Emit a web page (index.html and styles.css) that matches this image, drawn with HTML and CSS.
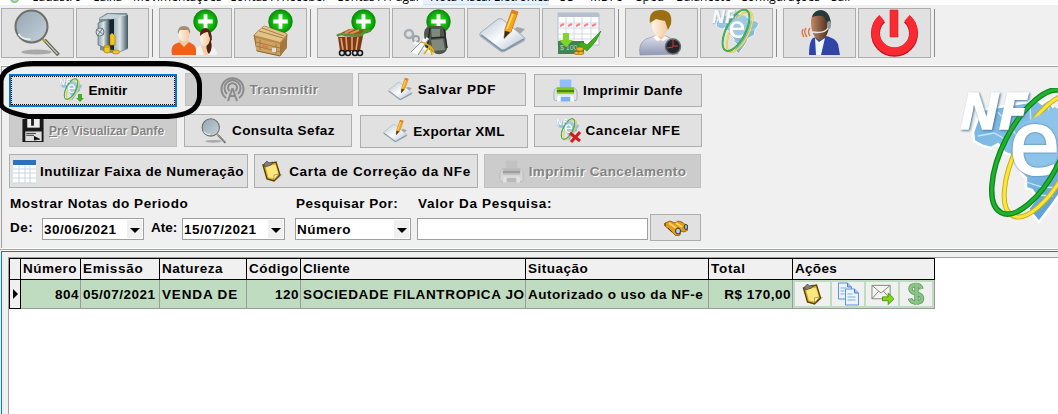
FILE: index.html
```
<!DOCTYPE html>
<html lang="pt-BR">
<head>
<meta charset="utf-8">
<title>Nota Fiscal Eletrônica</title>
<link rel="stylesheet" href="styles.css">
</head>
<body>
<svg class="defs" width="0" height="0">
  <defs>
    <linearGradient id="metal" x2="1"><stop stop-color="#8fa3ac"/><stop offset=".5" stop-color="#dce6ea"/><stop offset="1" stop-color="#40565f"/></linearGradient>
    <radialGradient id="green"><stop stop-color="#3ee02c"/><stop offset=".7" stop-color="#0fb40c"/><stop offset="1" stop-color="#078a08"/></radialGradient>
    <linearGradient id="glass" x2="1" y2="1"><stop stop-color="#94a5b3"/><stop offset="1" stop-color="#c6d2da"/></linearGradient>
    <linearGradient id="paper" x2="1" y2="1"><stop stop-color="#b9c3ce"/><stop offset=".5" stop-color="#fafcff"/><stop offset="1" stop-color="#aab8c6"/></linearGradient>
    <linearGradient id="map" x2=".7" y2="1"><stop stop-color="#6fb0dd"/><stop offset=".5" stop-color="#8cc3ea"/><stop offset="1" stop-color="#4f97cf"/></linearGradient>
    <linearGradient id="skin" x2="1"><stop stop-color="#fff3e4"/><stop offset="1" stop-color="#f3c9a0"/></linearGradient>
    <linearGradient id="brown" x2="1"><stop stop-color="#c08a66"/><stop offset="1" stop-color="#4a2a18"/></linearGradient>
    <linearGradient id="shirt" y2="1" x2="0"><stop stop-color="#dcdfec"/><stop offset="1" stop-color="#9298b4"/></linearGradient>
  </defs>
  <symbol id="plus" viewBox="0 0 26 26">
    <circle cx="13" cy="13" r="12.300" fill="url(#green)" stroke="#0a8a0a" stroke-width=".8"/>
    <path d="M13 5.500v15M5.500 13h15" stroke="#fff" stroke-width="4"/>
  </symbol>
  <symbol id="lens" viewBox="0 0 48 48">
    <ellipse cx="23" cy="43" rx="15" ry="2.600" fill="#a9a9a9"/>
    <path d="M31 31l14 15" stroke="#66665c" stroke-width="3.600"/>
    <path d="M30 30l14 15" stroke="#c9c9b4" stroke-width="1.200"/>
    <path d="M29 30l3 3" stroke="#b9a23b" stroke-width="2.400"/>
    <circle cx="18" cy="17.500" r="16" fill="url(#glass)" stroke="#6e7168" stroke-width="2"/>
    <path d="M5 25c3 4 7 6 12 5" stroke="#e4edf2" stroke-width="2" fill="none"/>
  </symbol>
  <symbol id="nfe" viewBox="0 0 144 140">
    <path d="M68 14l8-3 6 5 7-5 6 12 12 3 8 6 18 4 7 7-3 9-8 10-2 16-12 6-8 5-3 11-12 17-13 17-11-13 9-12-5-7-6-2 0-10-5-5-5-16-11-4-7-9-7 4-8-2-9-5-1-9 8-22z" fill="url(#map)" stroke="#fff" stroke-width="2.500"/>
    <path d="M18 48l16-3 13 7M38 24l12 14 8 12M70 15l1 22 19 6 8 18 17 5 17-8M90 15l-5 22 17-13M100 25l-5 22 18-18M66 94l16 5 22 1M77 107l16 1M62 79l20-3" fill="none" stroke="#c8e5f7" stroke-width="1.300"/>
    <g fill="none">
      <ellipse cx="83" cy="68" rx="67" ry="27" transform="rotate(-63 83 68)" stroke="#c9ad12" stroke-width="5"/>
      <ellipse cx="83" cy="68" rx="67" ry="27" transform="rotate(-63 83 68)" stroke="#fae53b" stroke-width="3.200"/>
    </g>
    <path d="M58 62l2-25 35-18 9 6-3 34-12 29-25-4z" fill="#8ec4e9"/>
    <text x="48" y="87" class="nfe-e">e</text>
    <ellipse cx="72" cy="64" rx="68" ry="29" transform="rotate(-63 72 64)" fill="none" stroke="#0b8718" stroke-width="5.500"/>
    <ellipse cx="72" cy="64" rx="68" ry="29" transform="rotate(-63 72 64)" fill="none" stroke="#20b22e" stroke-width="3"/>
    <text x="0" y="41" class="nfe-nf" textLength="66" lengthAdjust="spacingAndGlyphs">NF</text>
  </symbol>
  <symbol id="note" viewBox="0 0 48 44">
    <path d="M22 29l16-11 8 2-4 4-14 5z" fill="#a5a5a5"/>
    <path d="M1 24l18-14q2-1 4 0l22 18q2 2 0 4L26 42q-3 2-5 0L1 27z" fill="url(#paper)" stroke="#a3afba"/>
    <path d="M2 26l20 15q2 1 4 0l19-11" fill="none" stroke="#8496a6" stroke-width="2"/>
    <path d="M25 29l1-9L33 1l6 2-7 20z" fill="#f7a51a" stroke="#b56b0c" stroke-width=".7"/>
    <path d="M28 20l7-18" stroke="#ffdd60" stroke-width="1.600"/>
    <path d="M25 30l1-8 5 1z" fill="#3a2b22"/>
    <path d="M33 1l6 2-1 3-6-2z" fill="#e8801a"/>
  </symbol>
  <symbol id="clip" viewBox="0 0 22 24">
    <path d="M15 22l7-7-3 0z" fill="#c9c9c9"/>
    <path d="M2 6l13-3 4 13-6 6-7-2z" fill="#d9ac1c" stroke="#5a4208" stroke-width="1.400"/>
    <path d="M4.500 7.500l10-2 3 10-5 4-5-1z" fill="#fbe77c"/>
    <path d="M13 21l0-5 5-1z" fill="#fff6c8" stroke="#8a6a12" stroke-width=".6"/>
    <path d="M3 5l3-3 2 2 4-1-2 3-6 2z" fill="#80807a" stroke="#46423a" stroke-width=".7"/>
  </symbol>
  <symbol id="printer" viewBox="0 0 26 25">
    <path d="M7 1h12v10H7z" fill="#8fc0f5"/>
    <path d="M1 14q0-3 3-4h18q3 1 3 4v7q0 2-2 2H3q-2 0-2-2z" fill="#dfe3ea" stroke="#a7adb8"/>
    <path d="M4 9h18v7H4z" fill="#83c71d"/>
    <path d="M4 12h18v2H4z" fill="#4b850b"/>
    <path d="M5 18h16l1 6H4z" fill="#f8fbff"/><path d="M8 19h10v5H8z" fill="#7db0ef"/>
  </symbol>
</svg>

<nav class="menu">
  <svg class="menu-logo" viewBox="0 0 10 10"><circle cx="5" cy="5" r="4" fill="#b9def3" stroke="#8fc77a" stroke-width="2"/></svg>
  <span class="m-cad">Cadastro</span><span class="m-cai">Caixa</span><span class="m-mov">Movimentações</span><span class="m-rec">Contas A Receber</span><span class="m-pag">Contas A Pagar</span><span class="m-nfe active">Nota Fiscal Eletronica</span><span class="m-os">OS</span><span class="m-mdf">MDFe</span><span class="m-spe">Sped</span><span class="m-bal">Balancete</span><span class="m-con">Configurações</span><span>Sair</span>
</nav>

<header class="toolbar">
  <div class="group">
    <button class="tool"><svg viewBox="0 0 73 50"><use href="#lens" x="12" y="1" width="49" height="48"/></svg></button>
    <button class="tool"><svg viewBox="0 0 73 50">
      <path d="M23 10l8-5h20l1 3v33l-13 5-15-4z" fill="#7d9199"/>
      <path d="M23 11l9-5 20 1-13 4z" fill="#c6d3d8"/>
      <path d="M36 11l16-4v33l-15 6z" fill="url(#metal)"/>
      <path d="M31 12l7-1v31l-7-1z" fill="#15252c"/>
      <path d="M22 15l11-4v30l-11-4z" fill="url(#metal)" stroke="#5f727a" stroke-width=".7"/>
      <circle cx="24" cy="24" r="4" fill="#d5dde0" stroke="#6b7d85"/><path d="M20 21l8 6M27 20l-6 8" stroke="#74858c"/>
      <g fill="#f3c71f" stroke="#a87c08" stroke-width=".7"><path d="M34 27l2-2 3 3v9h-5z"/><ellipse cx="31" cy="39" rx="3" ry="2"/><path d="M28 39h6v5q-3 2-6 0z"/><ellipse cx="40" cy="44" rx="3.500" ry="2"/></g>
    </svg></button>
  </div>
  <i class="sep"></i>
  <div class="group">
    <button class="tool"><svg viewBox="0 0 73 50">
      <use href="#plus" x="34" y="1" width="25" height="25"/>
      <path d="M13 47q-2-8 3-11l5-2h9l5 3q3 3 2 10z" fill="#f06018"/>
      <path d="M20 34l5 5 5-5-2-6h-6z" fill="#eec9a6"/>
      <ellipse cx="25" cy="26" rx="5.500" ry="7.500" fill="url(#skin)"/><path d="M19 26q-1-8 6-8 7 0 6 8l-2-4h-8z" fill="#a68c72"/>
      <path d="M37 47q-1-8 4-9h11q6 2 6 9z" fill="#f2f2f2"/>
      <path d="M42 38h10l-3 9h-4z" fill="#f1cda8"/>
      <path d="M45 22q7 0 7 11 2 8-2 13-4-4-2-15z" fill="#4f210f"/>
      <ellipse cx="46" cy="30" rx="5" ry="8" fill="url(#skin)"/><path d="M41 28q0-8 6-8 6 1 6 13-3-3-4-9-4 0-8 4z" fill="#55240f"/>
    </svg></button>
    <button class="tool"><svg viewBox="0 0 73 50">
      <use href="#plus" x="34" y="1" width="25" height="25"/>
      <path d="M20 27l10-9 23 8-1 14-6 8-23-5z" fill="#b98a49" stroke="#8e6a37"/>
      <path d="M20 27l10-9 23 8-7 8z" fill="#e3c288"/>
      <path d="M22 30l24 6v11l-24-5z" fill="#cfa35f"/><path d="M46 36l7-8v12l-7 7z" fill="#a67a40"/>
      <path d="M22 34l24 6M22 38l24 6M25 23l24 7M28 20l22 8M46 39l7-8M46 43l7-8M26 32v10M42 36v10" stroke="#96713b" stroke-width=".8" fill="none"/>
      <path d="M28 37l6 1v2l-6-1z" fill="#e07a54"/><path d="M38 40h4v4h-4z" fill="#ddd"/>
    </svg></button>
  </div>
  <i class="sep"></i>
  <div class="group">
    <button class="tool"><svg viewBox="0 0 73 50">
      <use href="#plus" x="34" y="1" width="25" height="25"/>
      <path d="M21 29l25-1-3 15H23z" fill="#7e3816"/><path d="M24 30l2 12M29 29l1 13M35 29v13M41 29l-2 13" stroke="#d9a070" stroke-width="1.700"/>
      <path d="M24 25l8-4 14 1-2 5z" fill="#9a501d"/><path d="M28 25l8-4M33 26l9-4" stroke="#d79155" stroke-width="2"/>
      <path d="M20 28q3-3 9-1l16 0q2-5 9-4" fill="none" stroke="#5f8f2d" stroke-width="2.500"/>
      <g fill="none" stroke="#16191b" stroke-width="1.600"><circle cx="25" cy="45" r="2.500"/><circle cx="31" cy="45" r="2.500"/><circle cx="38" cy="45" r="2.500"/><circle cx="43" cy="45" r="2.500"/></g>
    </svg></button>
    <button class="tool"><svg viewBox="0 0 73 50">
      <use href="#plus" x="34" y="1" width="25" height="25"/>
      <path d="M32 25q1-7 7-7h11q5 3 4 10l1 13q-2 6-10 5l-12-5z" fill="#50564d"/><path d="M39 21h9v8l-8 1zM39 32l12-1 2 11-12 1z" fill="#81887c"/><path d="M39 30l14-1M38 20l-3 21M52 21l3 19" stroke="#242a23" stroke-width="1.500"/>
      <circle cx="17" cy="26" r="4" fill="none" stroke="#a5adb0" stroke-width="2.500"/><circle cx="24" cy="31" r="3" fill="none" stroke="#9aa4a6" stroke-width="2"/>
      <path d="M21 45l12-14M24 46l12-16M22 34l18 11" stroke="#f8fafa" stroke-width="3"/><path d="M19 44l11-11M26 47l11-17" stroke="#8b9496"/>
      <path d="M29 34q6 1 9 5l2 8M42 45q-2-6-4-7l-6 8" fill="none" stroke="#e3af13" stroke-width="1.600"/>
    </svg></button>
    <button class="tool"><svg viewBox="0 0 73 50"><use href="#note" x="12" y="1" width="48" height="44"/></svg></button>
    <button class="tool"><svg viewBox="0 0 73 50">
      <path d="M16 5h40q1 0 1 2v30H16z" fill="#fff" stroke="#b5bfca"/><path d="M16 5h41v4H16z" fill="#b4c0cc"/>
      <path d="M16 15h41M16 20h41M16 26h41M16 31h41M24 9v28M32 9v28M40 9v28M49 9v28" stroke="#d3d9e4"/>
      <path d="M18 18l4-2M26 18l4-2M34 18l4-2M42 18l4-2M50 18l4-2" stroke="#f08688" stroke-width="2.500"/>
      <path d="M16 33h26v13H16z" fill="#438253"/><text x="18" y="42" class="bill">$ 100</text>
      <path d="M21 25h6v7h4l-7 7-7-7h4z" fill="#81d329"/>
      <path d="M35 36l5-2 5 3L59 23q-4 11-14 20z" fill="#43ae1c" stroke="#2e8c16" stroke-width=".7"/>
      <g fill="#f6b622" stroke="#ad6c0b" stroke-width=".7"><ellipse cx="35" cy="45" rx="3" ry="1.500"/><ellipse cx="38" cy="41" rx="3.500" ry="2"/><ellipse cx="39" cy="45" rx="3" ry="1.500"/></g>
    </svg></button>
  </div>
  <i class="sep"></i>
  <div class="group">
    <button class="tool"><svg viewBox="0 0 73 50">
      <path d="M15 47q-2-12 6-16l9-3h11q11 3 12 18z" fill="url(#shirt)" stroke="#858ba8" stroke-width=".6"/>
      <path d="M30 27h11v3l-5 4-6-4z" fill="#f0c99e"/><path d="M28 29l4-2 4 5 4-4 3 2-5 3-2-1-4 1z" fill="#fff"/>
      <ellipse cx="35" cy="18" rx="8" ry="10.500" fill="url(#skin)"/><path d="M25 15Q23 2 36 2q12 0 10 14l-3 6-3-9q-6-1-9-2-5 3-6 4z" fill="#9b7012"/>
      <circle cx="48" cy="38.500" r="7.500" fill="#23272a" stroke="#666b70" stroke-width="1.500"/><path d="M48 32v7l-6 1M48 38h5" stroke="#cf3b35" fill="none"/>
    </svg></button>
    <button class="tool"><svg viewBox="0 0 73 50"><use class="pale" href="#nfe" x="12" y="1" width="48" height="46.700"/></svg></button>
  </div>
  <i class="sep"></i>
  <div class="group">
    <button class="tool"><svg viewBox="0 0 73 50">
      <path d="M26 47q0-14 4-17l10-3q13 3 15 9l2 11z" fill="#3145a8"/><path d="M32 30l4 4 6-4-4 17h-5z" fill="#edf7fb"/><path d="M32 26l4 6 6-6z" fill="#6a432c"/>
      <path d="M28 13q0-9 9-9 9 1 9 11 0 15-9 17-9-2-9-19z" fill="url(#brown)"/><path d="M29 9q2-7 9-7 9 1 10 14l-3 1q-2-6-5-9-6-1-11 1z" fill="#26393b"/>
      <path d="M45 17v3q-3 6-16 4" fill="none" stroke="#dfe4e6" stroke-width="1.500"/><ellipse cx="46" cy="17" rx="2" ry="4" fill="#909ca1"/>
      <path d="M27 20q-3 4 0 8M23 20q-3 4 1 9M20 21q-2 4 1 8" fill="none" stroke="#df7444" stroke-width="1.400"/>
    </svg></button>
    <button class="tool"><svg viewBox="0 0 73 50">
      <path d="M24 10a19 19 0 1 0 25 0" fill="none" stroke="#c40f18" stroke-width="9" transform="translate(0 1)"/>
      <path d="M24 10a19 19 0 1 0 25 0" fill="none" stroke="#fa2932" stroke-width="8"/>
      <path d="M32 2h8v27h-8z" fill="#f92b31" stroke="#d51f26" stroke-width=".6"/>
    </svg></button>
  </div>
  <i class="sep"></i>
</header>

<main class="panel">
  <div class="commands">
    <div class="row row-1">
      <button class="btn focus"><svg class="i25" viewBox="0 0 25 25"><use class="pale" href="#nfe" width="24" height="24"/><path d="M19 16h4v4h2l-4 4-4-4h2z" fill="#42af1f"/></svg><b class="t-emitir">Emitir</b></button>
      <button class="btn off up"><svg class="i25" viewBox="0 0 25 25" fill="none" stroke="#8b8b8b" stroke-width="2"><path d="M6 21A11 11 0 1 1 19 21M7 17A8 8 0 1 1 18 17M9.500 14A4.500 4.500 0 1 1 15.500 14M12.500 11L8 24M12.500 11L17 24M10 19h5"/></svg><b class="t-trans">Transmitir</b></button>
      <button class="btn up gap-5"><svg class="i25" viewBox="0 0 26 25"><use href="#note" width="26" height="24"/></svg><b class="t-salvar">Salvar PDF</b></button>
      <button class="btn"><svg class="i25" viewBox="0 0 26 25"><use href="#printer" width="26" height="25"/></svg><b class="t-danfe">Imprimir Danfe</b></button>
    </div>
    <div class="row row-2">
      <button class="btn off"><svg class="i22" viewBox="0 0 22 25"><path d="M0 0h22v24H0z" fill="#191919"/><path d="M5 0h13v9H5z" fill="#ededed"/><path d="M9 0h3v7H9z" fill="#222"/><path d="M3 13h17v10H3z" fill="#dedede"/><path d="M4 15h10M4 17h8M12 18l6 3-6 1" stroke="#333"/></svg><b class="t-pre"><u>P</u>ré Visualizar Danfe</b></button>
      <button class="btn gap-7"><svg class="i26" viewBox="0 0 26 26"><use href="#lens" width="26" height="26"/></svg><b class="t-sefaz">Consulta Sefaz</b></button>
      <button class="btn down"><svg class="i25" viewBox="0 0 26 25"><use href="#note" width="26" height="24"/></svg><b class="t-xml">Exportar XML</b></button>
      <button class="btn gap-6"><svg class="i25" viewBox="0 0 25 25"><use class="pale" href="#nfe" width="24" height="24"/><path d="M14 15l10 8M24 14L15 24" stroke="#d71920" stroke-width="3"/></svg><b class="t-cancel">Cancelar NFE</b></button>
    </div>
    <div class="row row-3">
      <button class="btn w-239"><svg class="i25" viewBox="0 0 25 25"><path d="M1 1h23v23H1z" fill="#fff"/><path d="M1 1h23v5H1z" fill="#2f70bd"/><path d="M1 10h23M1 14h23M1 19h23M7 6v18M13 6v18M18 6v18M1 24h23" stroke="#c9d5e1"/></svg><b class="t-inut">Inutilizar Faixa de Numeração</b></button>
      <button class="btn w-224"><svg class="i22" viewBox="0 0 22 24"><use href="#clip" width="22" height="24"/></svg><b class="t-carta">Carta de Correção da NFe</b></button>
      <button class="btn off w-217"><svg class="i25 gray" viewBox="0 0 26 25"><use href="#printer" width="26" height="25"/></svg><b class="t-impcan">Imprimir Cancelamento</b></button>
    </div>
    <div class="captions"><b class="t-most">Mostrar Notas do Periodo</b><b class="t-pesq">Pesquisar Por:</b><b class="t-valor">Valor Da Pesquisa:</b></div>
    <div class="filters">
      <b class="l-de">De:</b><div class="field w-102"><b class="t-date">30/06/2021</b><i class="drop"></i></div>
      <b class="l-ate">Ate:</b><div class="field w-103"><b class="t-date">15/07/2021</b><i class="drop"></i></div>
      <div class="field w-116"><b class="t-num">Número</b><i class="drop"></i></div>
      <div class="field w-231"></div>
      <button class="btn find"><svg viewBox="0 0 24 16"><path d="M1 3l5-2 5 2 3-2 4 1 6 5v3l-4 2-3-1-1 4-4 1-3-3L1 6z" fill="#e69a16" stroke="#8a520a" stroke-width=".8"/><path d="M5 3l7 5M12 3l6 4" stroke="#ffda70" stroke-width="2"/><ellipse cx="14" cy="11" rx="2.500" ry="3" fill="#a9d2f5" stroke="#3f3421"/><ellipse cx="22" cy="7" rx="1.800" ry="2.500" fill="#8dbbe4" stroke="#3f3421"/><path d="M1 3v3M4 8l4 4" stroke="#593507"/></svg></button>
    </div>
  </div>
  <svg class="brand" viewBox="0 0 144 140"><use href="#nfe" width="144" height="140"/></svg>
</main>

<section class="list">
  <div class="grid">
    <div class="line head">
      <span></span><span class="t-h1">Número</span><span class="t-h2">Emissão</span><span class="t-h3">Natureza</span><span class="t-h4">Código</span><span class="t-h5">Cliente</span><span class="t-h6">Situação</span><span class="t-h7">Total</span><span class="t-h8">Ações</span>
    </div>
    <div class="line data">
      <span class="mark"></span><span class="num t-c1">804</span><span class="t-c2">05/07/2021</span><span class="t-c3">VENDA DE</span><span class="num t-c4">120</span><span class="t-c5">SOCIEDADE FILANTROPICA JO</span><span class="t-c6">Autorizado o uso da NF-e</span><span class="num t-c7">R$ 170,00</span>
      <span class="acts">
        <i class="a35"><svg viewBox="0 0 22 24"><use href="#clip" width="22" height="24"/></svg></i>
        <i class="a32"><svg viewBox="0 0 22 24"><g stroke="#5f91d8" fill="#eaf3ff"><path d="M1 1h9l4 4v12H1z"/><path d="M8 7h9l4 4v12H8z"/></g><path d="M3 6h6M3 9h4M3 12h4M10 12h5M10 15h8M10 18h8" stroke="#82ade4"/><path d="M10 1v4h4M17 7v4h4" fill="#9fc3ef" stroke="#4a80cf"/></svg></i>
        <i class="a32"><svg viewBox="0 0 24 24"><path d="M1 3h19v14H1z" fill="#f4f4f0" stroke="#85857f"/><path d="M1 3l9.500 8L20 3M1 17l7-8M20 17l-7-8" fill="none" stroke="#85857f"/><path d="M12 15h6v-4l6 6-6 6v-4h-6z" fill="#82d51e" stroke="#4a9610"/></svg></i>
        <i class="a32"><svg viewBox="0 0 20 24"><path d="M15 7q-1-4-5.500-4Q4 3 4 7q0 3 5.500 4.500 6 1.500 6 5 0 4-6 4-5 0-6-4M10 1v22" fill="none" stroke="#5f9f5d" stroke-width="4.500"/><path d="M15 7q-1-4-5.500-4Q4 3 4 7q0 3 5.500 4.500 6 1.500 6 5 0 4-6 4-5 0-6-4M10 1v22" fill="none" stroke="#8bc487" stroke-width="2.800"/></svg></i>
      </span>
    </div>
  </div>
</section>
<svg class="marker" viewBox="0 0 206 64"><path d="M32 4.500H166Q198 5 199.500 25V38Q198 56 168 57.500H28Q2 52 1 45V22Q3 6 32 4.500" fill="none" stroke="#000" stroke-width="5"/></svg>
</body>
</html>
```
FILE: styles.css
```
* { box-sizing: border-box; }
body { margin: 0; width: 1058px; height: 414px; overflow: hidden; background: #f0f0f0; color: #000; font-family: "Liberation Sans", Arial, sans-serif; font-size: 13.5px; position: relative; display: flex; flex-direction: column; }
.defs { position: absolute; }
button { font: inherit; color: inherit; margin: 0; padding: 0; }
i { font-style: normal; }
b, .line span { white-space: nowrap; letter-spacing: .49px; }

.nfe-nf { font: italic bold 51px "Open Sans", sans-serif; fill: #fff; stroke: #fff; stroke-width: 1.500px; filter: drop-shadow(1px 1px 1px #46779b); }
.nfe-e { font: 600 92px "Open Sans", sans-serif; fill: #fff; filter: drop-shadow(0 0 1px #46779b); }
.bill { font: 7px "Liberation Sans", sans-serif; fill: #b4d4b9; }
.pale { opacity: .8; }

.menu { height: 5px; flex: none; background: #fff; display: flex; overflow: hidden; font: 12px/12px "Open Sans", sans-serif; padding-left: 10px; }
.menu span { height: 14px; margin-top: -9px; flex: none; white-space: nowrap; }
.menu-logo { width: 9px; height: 9px; margin: -6px 12px 0 0; flex: none; }
.m-cad { width: 61px; } .m-cai { width: 41px; } .m-mov { width: 96px; } .m-rec { width: 107px; } .m-pag { width: 87px; }
.menu .m-nfe { width: 126px; margin-right: 9px; padding-left: 7px; background: #e5f1fb; border-bottom: 1px solid #cce4f7; }
.m-os { width: 32px; } .m-mdf { width: 46px; } .m-spe { width: 40px; } .m-bal { width: 64px; } .m-con { width: 91px; }

.toolbar { height: 60px; flex: none; display: flex; align-items: flex-start; padding: 3px 0 0 1px; }
.group { display: flex; gap: 2px; }
.tool { width: 73px; height: 50px; border: 1px solid #adadad; background: #e1e1e1; }
.tool svg { display: block; width: 73px; height: 50px; margin: -1px; }
.sep { width: 1px; height: 48px; margin: 1px 6px 0 3px; background: #8c8c8c; }

.panel { height: 184px; flex: none; margin-left: 1px; border-top: 1px solid #fff; border-bottom: 1px solid #fff; box-shadow: inset 1px 1px #a0a0a0; display: flex; overflow: hidden; }
.commands { width: 949px; flex: none; padding: 8px 0 0 8px; display: flex; flex-direction: column; }
.row { display: flex; gap: 8px; align-items: flex-start; height: 40px; }
.row-3 { gap: 6px; height: 39px; }
.btn { width: 168px; height: 33px; flex: none; display: flex; align-items: center; justify-content: center; gap: 5px; border: 1px solid #adadad; background: #e1e1e1; }
.row-3 .btn { height: 34px; }
.up { margin-top: -1px; } .down { margin-top: 1px; }
.gap-5 { margin-left: -3px; } .gap-7 { margin-left: -1px; } .gap-6 { margin-left: -2px; }
.row .w-239 { width: 239px; gap: 3px; padding-right: 1px; } .row .w-224 { width: 224px; gap: 6px; } .row .w-217 { width: 217px; }
.focus { border: 2px solid #0078d7; outline: 1px dotted #000; outline-offset: -3px; }
.off { background: #ccc; border-color: #bfbfbf; color: #838383; text-shadow: 1px 1px #fff; }
.btn svg { display: block; flex: none; }
.i25 { width: 25px; height: 25px; } .i26 { width: 26px; height: 26px; } .i22 { width: 22px; height: 24px; }
.gray { filter: grayscale(1); opacity: .5; }
.btn .t-emitir { letter-spacing: .12px; }
.btn .t-trans { letter-spacing: .37px; }
.btn .t-salvar { letter-spacing: .7px; }
.btn .t-danfe { letter-spacing: .33px; }
.btn .t-pre { font-size: 12px; letter-spacing: 0; }
.btn .t-sefaz { letter-spacing: .45px; }
.btn .t-xml { letter-spacing: .3px; }
.btn .t-cancel { letter-spacing: .6px; }
.btn .t-inut { letter-spacing: .46px; }
.btn .t-carta { letter-spacing: .66px; }
.btn .t-impcan { letter-spacing: .36px; }
.brand { width: 144px; height: 140px; flex: none; margin: 22px 0 0 10px; }

.captions { display: flex; height: 21px; padding-left: 1px; line-height: 21px; }
.captions .t-most { width: 286px; letter-spacing: .55px; } .t-pesq { width: 122px; }
.captions .t-valor { letter-spacing: .7px; }
.filters { display: flex; align-items: flex-start; height: 27px; padding-left: 1px; line-height: 27px; }
.l-de { width: 32px; } .l-ate { width: 31px; margin-left: 7px; }
.filters .l-ate { letter-spacing: 0; }
.field { height: 22px; margin-top: 4px; flex: none; background: #fff; border: 1px solid #a0a0a0; display: flex; justify-content: space-between; line-height: 20px; padding: 1px; }
.field b { line-height: 19px; }
.w-102 { width: 102px; } .w-103 { width: 103px; } .w-116 { width: 116px; margin-left: 10px; } .w-231 { width: 231px; margin-left: 6px; }
.drop { width: 15px; height: 18px; background: #f0f0f0; display: flex; align-items: center; justify-content: center; }
.drop::after { content: ""; border: 5px solid transparent; border-top-color: #000; border-bottom: 0; margin-top: 2px; }
.find { width: 51px; height: 27px; margin-left: 2px; }
.find svg { width: 24px; height: 16px; }

.list { flex: 1; border-top: 1px solid #a0a0a0; padding: 1px 0 0 1px; background: linear-gradient(#fff 0 1px, #f0f0f0 1px); display: flex; }
.grid { flex: 1; border-top: 1px solid #0078d7; border-left: 1px solid #0078d7; padding: 5px 0 0 6px; background: linear-gradient(#a0a0a0, #a0a0a0) 6px 5px / 100% 1px no-repeat, linear-gradient(#a0a0a0, #a0a0a0) 6px 5px / 1px 100% no-repeat, linear-gradient(#fff, #fff) 7px 6px / 100% 100% no-repeat; }
.line { display: grid; width: 926px; grid-template-columns: 12px 60px 79px 87px 54px 225px 183px 84px 142px; margin-left: 1px; }
.line span { overflow: hidden; font-weight: bold; padding: 0 2px; border-right: 1px solid #9b9b9b; }
.head { height: 22px; margin-top: 1px; border: 1px solid #000; border-right: 0; line-height: 20px; grid-template-columns: 11px 60px 79px 87px 54px 225px 183px 84px 142px; background: #f0f0f0; }
.line.head span { border-right-color: #000; }
.line .t-h2 { letter-spacing: .7px; } .line .t-h5 { letter-spacing: .3px; } .line .t-h7 { letter-spacing: .7px; } .line .t-h8 { letter-spacing: .3px; }
.line .t-c3 { letter-spacing: .85px; } .line .t-c5 { letter-spacing: .64px; padding-right: 1px; }
.data { height: 29px; background: #c0dcc0; line-height: 29px; border-bottom: 1px solid #9b9b9b; }
.line .mark { background: #f0f0f0; border: 1px solid #000; border-top: 0; display: flex; align-items: center; height: 29px; padding: 0; }
.mark::after { content: ""; border: 5px solid transparent; border-left-color: #000; border-right: 0; margin-left: 3px; }
.line .num { text-align: right; padding-right: 1px; }
.line .acts { display: flex; gap: 2px; padding: 2px; }
.acts i { height: 24px; width: 32px; flex: none; background: #f0f0f0; display: flex; justify-content: center; }
.acts .a35 { width: 35px; }
.acts svg { width: 23px; height: 24px; }

.marker { position: absolute; left: 0; top: 59px; width: 206px; height: 64px; }
```
